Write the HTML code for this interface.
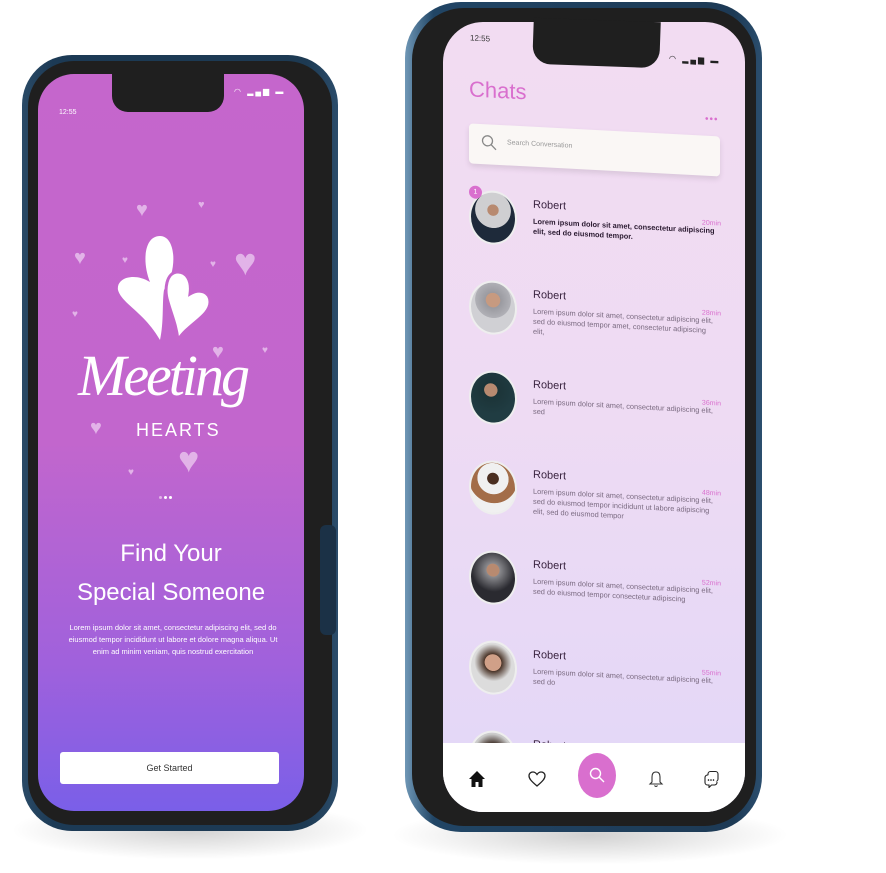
<!DOCTYPE html>
<html><head><meta charset="utf-8"><style>
*{margin:0;padding:0;box-sizing:border-box}
body{width:886px;height:873px;background:#fff;position:relative;overflow:hidden;font-family:"Liberation Sans",sans-serif}
.a{position:absolute}
.shadow{position:absolute;border-radius:50%;background:radial-gradient(ellipse at center,rgba(0,0,0,.18),rgba(0,0,0,0) 70%)}
.lp{left:22px;top:55px;width:316px;height:776px;border-radius:50px;background:linear-gradient(90deg,#2a4a66,#1c3a55 10%,#1d3a53 90%,#2b4c6a);}
.lb{left:28px;top:61px;width:304px;height:764px;border-radius:46px;background:#1f1f1f}
.ls{left:38px;top:74px;width:266px;height:737px;border-radius:36px;background:linear-gradient(180deg,#c566cc 0%,#c266cd 50%,#a061dc 80%,#7a5fe8 100%);overflow:hidden}
.rp{left:405px;top:2px;width:357px;height:830px;border-radius:56px;background:linear-gradient(90deg,#6f97b6,#214565 8%,#1d3a55 92%,#2b4e6e)}
.rb{left:412px;top:8px;width:344px;height:818px;border-radius:52px;background:#1f1f1f}
.rs{left:443px;top:22px;width:302px;height:790px;border-radius:40px;background:linear-gradient(180deg,#f2dcf2 0%,#eedbf3 50%,#e2d7f8 100%);overflow:hidden}
.heart{position:absolute;color:#e2b3e8;line-height:1}
.w{color:#fff}
.row{position:absolute;left:26px;width:252px;height:70px}
.av{position:absolute;left:0;top:0;width:48px;height:54px;border-radius:50%;border:2px solid #eee;overflow:hidden}
.nm{position:absolute;left:64px;top:6px;font-size:11px;color:#3a2440}
.tm{position:absolute;right:0;top:18px;font-size:7px;color:#d96fce}
.tx{position:absolute;left:64px;top:24px;width:186px;font-size:7.4px;line-height:10px;color:#7a6a80}
</style></head><body>
<div class="shadow" style="left:10px;top:800px;width:360px;height:60px"></div>
<div class="shadow" style="left:390px;top:805px;width:400px;height:60px"></div>

<div class="a lp"></div>
<div class="a lb"></div>
<div class="a ls">
  <div class="a w" style="left:21px;top:35px;font-size:7px">12:55</div>
  <div class="a w" style="left:196px;top:13px;font-size:8px;letter-spacing:2px">◠ ▂▄▆ ▬</div>
  <div class="heart" style="left:98px;top:126px;font-size:20px">♥</div>
  <div class="heart" style="left:160px;top:126px;font-size:11px">♥</div>
  <div class="heart" style="left:36px;top:174px;font-size:20px">♥</div>
  <div class="heart" style="left:84px;top:182px;font-size:10px">♥</div>
  <div class="heart" style="left:172px;top:186px;font-size:10px">♥</div>
  <div class="heart" style="left:196px;top:170px;font-size:38px">♥</div>
  <div class="heart" style="left:34px;top:236px;font-size:10px">♥</div>
  <div class="heart" style="left:174px;top:268px;font-size:20px">♥</div>
  <div class="heart" style="left:224px;top:272px;font-size:10px">♥</div>
  <div class="heart" style="left:52px;top:344px;font-size:20px">♥</div>
  <div class="heart" style="left:140px;top:368px;font-size:36px">♥</div>
  <div class="heart" style="left:90px;top:394px;font-size:10px">♥</div>
  <svg class="a" style="left:76px;top:158px" width="100" height="110" viewBox="0 0 100 110">
    <path d="M46 4 C30 4 28 30 36 50 C20 40 2 46 4 58 C8 72 30 80 46 108 C50 90 48 70 50 58 C64 38 62 4 46 4Z" fill="#fff"/>
    <path d="M64 40 C52 40 50 58 54 70 C58 84 62 92 64 108 C74 92 96 84 96 70 C96 60 86 56 76 62 C78 48 72 40 64 40Z" fill="#fff" stroke="#c566cc" stroke-width="3"/>
  </svg>
  <div class="a w" style="left:40px;top:268px;font-family:'Liberation Serif',serif;font-style:italic;font-size:58px;letter-spacing:-3px">Meeting</div>
  <div class="a w" style="left:98px;top:346px;font-size:18px;letter-spacing:2px">HEARTS</div>
  <div class="a" style="left:121px;top:422px;width:3px;height:3px;border-radius:50%;background:#e2b3e8"></div>
  <div class="a" style="left:126px;top:422px;width:3px;height:3px;border-radius:50%;background:#fff"></div>
  <div class="a" style="left:131px;top:422px;width:3px;height:3px;border-radius:50%;background:#fff"></div>
  <div class="a w" style="left:0;width:266px;text-align:center;top:460px;font-size:24px;line-height:39px">Find Your<br>Special Someone</div>
  <div class="a w" style="left:30px;width:210px;text-align:center;top:548px;font-size:7.5px;line-height:12px">Lorem ipsum dolor sit amet, consectetur adipiscing elit, sed do eiusmod tempor incididunt ut labore et dolore magna aliqua. Ut enim ad minim veniam, quis nostrud exercitation</div>
  <div class="a" style="left:22px;top:678px;width:219px;height:32px;background:#fff;border-radius:3px;text-align:center;line-height:32px;font-size:9px;color:#333">Get Started</div>
</div>
<div class="a" style="left:112px;top:74px;width:112px;height:38px;background:#1f1f1f;border-radius:0 0 16px 16px"></div>

<div class="a rp"></div>
<div class="a" style="left:413px;top:165px;width:6px;height:32px;background:#163048;border-radius:3px"></div>
<div class="a" style="left:413px;top:225px;width:6px;height:62px;background:#163048;border-radius:3px"></div>
<div class="a" style="left:413px;top:305px;width:6px;height:62px;background:#163048;border-radius:3px"></div>
<div class="a rb"></div>
<div class="a" style="left:320px;top:525px;width:16px;height:110px;background:#1b3146;border-radius:6px"></div>
<div class="a rs">
  <div style="position:absolute;left:0;top:0;width:302px;height:790px;transform:skewY(3deg);transform-origin:0 0">
    <div class="a" style="left:27px;top:10px;font-size:8px;color:#333">12:55</div>
    <div class="a" style="left:226px;top:20px;font-size:8px;color:#222;letter-spacing:2px">◠ ▂▄▆ ▬</div>
    <div class="a" style="left:26px;top:53px;font-size:22px;color:#d96fce">Chats</div>
    <div class="a" style="left:262px;top:78px;font-size:10px;color:#d96fce;letter-spacing:1px">•••</div>
    <div class="a" style="left:26px;top:100px;width:251px;height:40px;background:#faf7f5;border-radius:4px;box-shadow:0 3px 6px rgba(0,0,0,.1)">
      <svg class="a" style="left:12px;top:10px" width="16" height="16" viewBox="0 0 16 16"><circle cx="6.5" cy="6.5" r="5" fill="none" stroke="#888" stroke-width="1.3"/><path d="M10 10l5 5" stroke="#888" stroke-width="1.3"/></svg>
      <div class="a" style="left:38px;top:14px;font-size:7px;color:#999">Search Conversation</div>
    </div>
    <div class="row" style="top:166px"><div class="av" style="background:radial-gradient(circle at 50% 35%,#b88a70 14%,#cfcfd1 15%,#cfcfd1 45%,#1e2a3a 46%)"></div><div class="a" style="left:0;top:-4px;width:13px;height:13px;border-radius:50%;background:#d96fce;color:#fff;font-size:7px;text-align:center;line-height:13px">1</div><div class="nm">Robert</div><div class="tm">20min</div><div class="tx" style="color:#2a1a30;font-weight:bold;width:188px">Lorem ipsum dolor sit amet, consectetur adipiscing elit, sed do eiusmod tempor.</div></div>
    <div class="row" style="top:256px"><div class="av" style="background:radial-gradient(circle at 50% 35%,#c79a80 18%,#9a9aa0 19%,#b0b0b6 45%,#d0d0d4 46%)"></div><div class="nm">Robert</div><div class="tm">28min</div><div class="tx">Lorem ipsum dolor sit amet, consectetur adipiscing elit, sed do eiusmod tempor amet, consectetur adipiscing elit,</div></div>
    <div class="row" style="top:346px"><div class="av" style="background:radial-gradient(circle at 45% 35%,#b88a70 16%,#1c3438 17%,#203c42 60%)"></div><div class="nm">Robert</div><div class="tm">36min</div><div class="tx">Lorem ipsum dolor sit amet, consectetur adipiscing elit, sed</div></div>
    <div class="row" style="top:436px"><div class="av" style="background:radial-gradient(circle at 50% 32%,#4a2e20 14%,#f0f0f0 15%,#f0f0f0 38%,#a36d48 39%,#a36d48 60%,#f0f0f0 61%)"></div><div class="nm">Robert</div><div class="tm">48min</div><div class="tx">Lorem ipsum dolor sit amet, consectetur adipiscing elit, sed do eiusmod tempor incididunt ut labore adipiscing elit, sed do eiusmod tempor</div></div>
    <div class="row" style="top:526px"><div class="av" style="background:radial-gradient(circle at 50% 35%,#b88a70 16%,#8a8a8e 17%,#2a2a30 55%)"></div><div class="nm">Robert</div><div class="tm">52min</div><div class="tx">Lorem ipsum dolor sit amet, consectetur adipiscing elit, sed do eiusmod tempor consectetur adipiscing</div></div>
    <div class="row" style="top:616px"><div class="av" style="background:radial-gradient(circle at 50% 40%,#d0a088 22%,#4a3428 23%,#dcdcdc 50%)"></div><div class="nm">Robert</div><div class="tm">55min</div><div class="tx">Lorem ipsum dolor sit amet, consectetur adipiscing elit, sed do</div></div>
    <div class="row" style="top:706px"><div class="av" style="background:radial-gradient(circle at 50% 40%,#b88a70 22%,#3a2a22 23%,#ccc 50%)"></div><div class="nm">Robert</div></div>
  </div>
  <div class="a" style="left:0;top:721px;width:302px;height:70px;background:#fff">
    <svg class="a" style="left:25px;top:27px" width="18" height="18" viewBox="0 0 18 18"><path d="M9 1L1 9h2.5v8h4v-5h3v5h4V9H17z" fill="#111"/></svg>
    <svg class="a" style="left:85px;top:27px" width="18" height="18" viewBox="0 0 18 18"><path d="M9 16C3 11 1 8.5 1 5.7 1 3.5 2.8 2 4.8 2 6.5 2 8 3 9 4.5 10 3 11.5 2 13.2 2 15.2 2 17 3.5 17 5.7 17 8.5 15 11 9 16Z" fill="none" stroke="#222" stroke-width="1.3"/></svg>
    <div class="a" style="left:135px;top:10px;width:38px;height:45px;border-radius:50%;background:#d96fce"></div>
    <svg class="a" style="left:145px;top:23px" width="18" height="18" viewBox="0 0 18 18"><circle cx="7.5" cy="7.5" r="5" fill="none" stroke="#fff" stroke-width="1.4"/><path d="M11 11l5 5" stroke="#fff" stroke-width="1.4"/></svg>
    <svg class="a" style="left:205px;top:27px" width="16" height="18" viewBox="0 0 16 18"><path d="M8 2C5 2 4 4 4 7v5L2 14h12l-2-2V7c0-3-1-5-4-5zM6.5 15.5Q8 17.5 9.5 15.5" fill="none" stroke="#333" stroke-width="1.1"/></svg>
    <svg class="a" style="left:261px;top:27px" width="16" height="18" viewBox="0 0 16 18"><rect x="4" y="1.5" width="10" height="10" rx="2.5" fill="none" stroke="#222" stroke-width="1.1"/><path d="M4 5H3.5A2.5 2.5 0 0 0 1 7.5v5A2.5 2.5 0 0 0 3.5 15H5v2.5L7.5 15h3a2.5 2.5 0 0 0 2.5-2.5V12" fill="#fff" stroke="#222" stroke-width="1.1"/><circle cx="4.5" cy="10" r=".8"/><circle cx="7" cy="10" r=".8"/><circle cx="9.5" cy="10" r=".8"/></svg>
  </div>
</div>
<div class="a" style="left:533px;top:20px;width:127px;height:46px;background:#1f1f1f;border-radius:0 0 18px 18px;transform:rotate(2deg)"></div>
</body></html>
